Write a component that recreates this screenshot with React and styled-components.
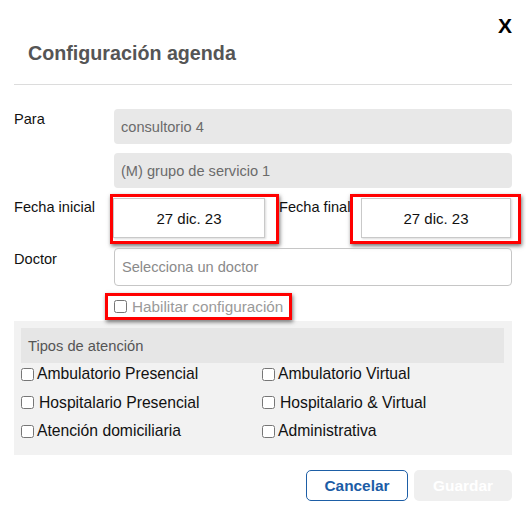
import styled, { createGlobalStyle } from 'styled-components';

const GlobalStyle = createGlobalStyle`
  html, body {
    margin: 0;
    padding: 0;
    background: #fff;
  }
  body {
    font-family: "Liberation Sans", Arial, sans-serif;
    color: #111;
  }
`;

const Modal = styled.div`
  width: 526px;
  height: 527px;
  box-sizing: border-box;
  padding: 0 14px 0 14px;
  background: #fff;
`;

const Header = styled.div`
  display: flex;
  justify-content: space-between;
  align-items: flex-start;
  padding-bottom: 19px;
  border-bottom: 1px solid #dcdcdc;
`;

const Title = styled.h2`
  margin: 41px 0 0 14px;
  font-size: 19.7px;
  line-height: 24px;
  font-weight: bold;
  color: #555;
`;

const CloseButton = styled.button`
  margin: 16px 0 0 0;
  padding: 0;
  border: none;
  background: none;
  font-family: "Liberation Sans", Arial, sans-serif;
  font-size: 21px;
  line-height: 20px;
  font-weight: bold;
  color: #000;
  cursor: pointer;
`;

const Row = styled.div`
  display: grid;
  grid-template-columns: 100px 1fr;
  margin-top: ${p => p.$top}px;
`;

const Label = styled.label`
  font-size: 14.6px;
  line-height: 17px;
  padding-top: ${p => p.$pad || 2}px;
  color: #111;
  white-space: nowrap;
`;

const ReadOnlyField = styled.div`
  height: 35px;
  box-sizing: border-box;
  padding: 0 7px;
  display: flex;
  align-items: center;
  background: #e8e8e8;
  border-radius: 4px;
  font-size: 14.6px;
  color: #6b6b6b;
`;

const DateRow = styled.div`
  display: flex;
  align-items: flex-start;
  margin-top: 6px;
`;

const Highlight = styled.div`
  box-sizing: border-box;
  border: 3px solid #f00;
  box-shadow: 1px 2px 4px rgba(0, 0, 0, 0.55);
  padding: ${p => p.$pad};
  flex: none;
`;

const DateInput = styled.div`
  width: ${p => p.$w}px;
  height: 40px;
  box-sizing: border-box;
  display: flex;
  align-items: center;
  justify-content: center;
  border: 1px solid #c9c9c9;
  box-shadow: 1px 1px 2px rgba(0, 0, 0, 0.15);
  background: #fff;
  font-size: 15px;
  color: #111;
`;

const DateLabel = styled(Label)`
  width: ${p => p.$w}px;
  flex: none;
`;

const SelectBox = styled.div`
  height: 38px;
  box-sizing: border-box;
  padding: 0 7px;
  display: flex;
  align-items: center;
  border: 1px solid #c6c6c6;
  border-radius: 4px;
  font-size: 14.6px;
  color: #8a8a8a;
`;

const EnableBox = styled(Highlight)`
  display: inline-flex;
  align-items: center;
  gap: 5px;
  margin: 7px 0 0 91px;
  height: 27px;
  font-size: 15.3px;
  color: #9a9a9a;
`;

const Check = styled.input.attrs({ type: 'checkbox' })`
  width: 13px;
  height: 13px;
  margin: 0;
  flex: none;
`;

const Panel = styled.div`
  margin-top: 1px;
  padding: 7px 8px 12px 7px;
  background: #f2f2f2;
`;

const PanelHeader = styled.div`
  height: 35px;
  box-sizing: border-box;
  padding: 0 7px;
  display: flex;
  align-items: center;
  background: #e6e6e6;
  font-size: 14.7px;
  color: #555;
`;

const OptionGrid = styled.div`
  display: grid;
  grid-template-columns: 241px 1fr;
  row-gap: 4.5px;
  margin-top: -1px;
`;

const Option = styled.label`
  display: flex;
  align-items: center;
  gap: ${p => (p.$wide ? 5 : 3)}px;
  height: 24px;
  font-size: 15.7px;
  color: #111;
  white-space: nowrap;
`;

const Footer = styled.div`
  display: flex;
  justify-content: flex-end;
  gap: 6px;
  margin-top: 15px;
`;

const Button = styled.button`
  height: 31px;
  width: ${p => p.$w}px;
  box-sizing: border-box;
  border-radius: 5px;
  font-family: "Liberation Sans", Arial, sans-serif;
  font-size: 15.4px;
  font-weight: bold;
  border: ${p => (p.$primary ? 'none' : '1px solid #1d5ea6')};
  background: ${p => (p.$primary ? '#efefef' : '#fff')};
  color: ${p => (p.$primary ? '#fff' : '#1b5ca6')};
  cursor: pointer;
`;

const options = [
  { text: 'Ambulatorio Presencial' },
  { text: 'Ambulatorio Virtual' },
  { text: 'Hospitalario Presencial', wide: true },
  { text: 'Hospitalario & Virtual', wide: true },
  { text: 'Atención domiciliaria' },
  { text: 'Administrativa' },
];

export default function App() {
  return (
    <>
      <GlobalStyle />
      <Modal>
        <Header>
          <Title>Configuración agenda</Title>
          <CloseButton>X</CloseButton>
        </Header>

        <Row $top={24}>
          <Label>Para</Label>
          <ReadOnlyField>consultorio 4</ReadOnlyField>
        </Row>
        <Row $top={9}>
          <span />
          <ReadOnlyField>(M) grupo de servicio 1</ReadOnlyField>
        </Row>

        <DateRow>
          <DateLabel $w={96} $pad={5}>Fecha inicial</DateLabel>
          <Highlight $pad="1px 11px 3px 0">
            <DateInput $w={152}>27 dic. 23</DateInput>
          </Highlight>
          <DateLabel $w={71} $pad={5}>Fecha final</DateLabel>
          <Highlight $pad="1px 7px 3px 8px">
            <DateInput $w={150}>27 dic. 23</DateInput>
          </Highlight>
        </DateRow>

        <Row $top={4}>
          <Label $pad={3}>Doctor</Label>
          <SelectBox>Selecciona un doctor</SelectBox>
        </Row>

        <EnableBox $pad="0 6px 0 6px">
          <Check />
          <span>Habilitar configuración</span>
        </EnableBox>

        <Panel>
          <PanelHeader>Tipos de atención</PanelHeader>
          <OptionGrid>
            {options.map(o => (
              <Option key={o.text} $wide={o.wide}>
                <Check />
                {o.text}
              </Option>
            ))}
          </OptionGrid>
        </Panel>

        <Footer>
          <Button $w={102}>Cancelar</Button>
          <Button $w={98} $primary>Guardar</Button>
        </Footer>
      </Modal>
    </>
  );
}
